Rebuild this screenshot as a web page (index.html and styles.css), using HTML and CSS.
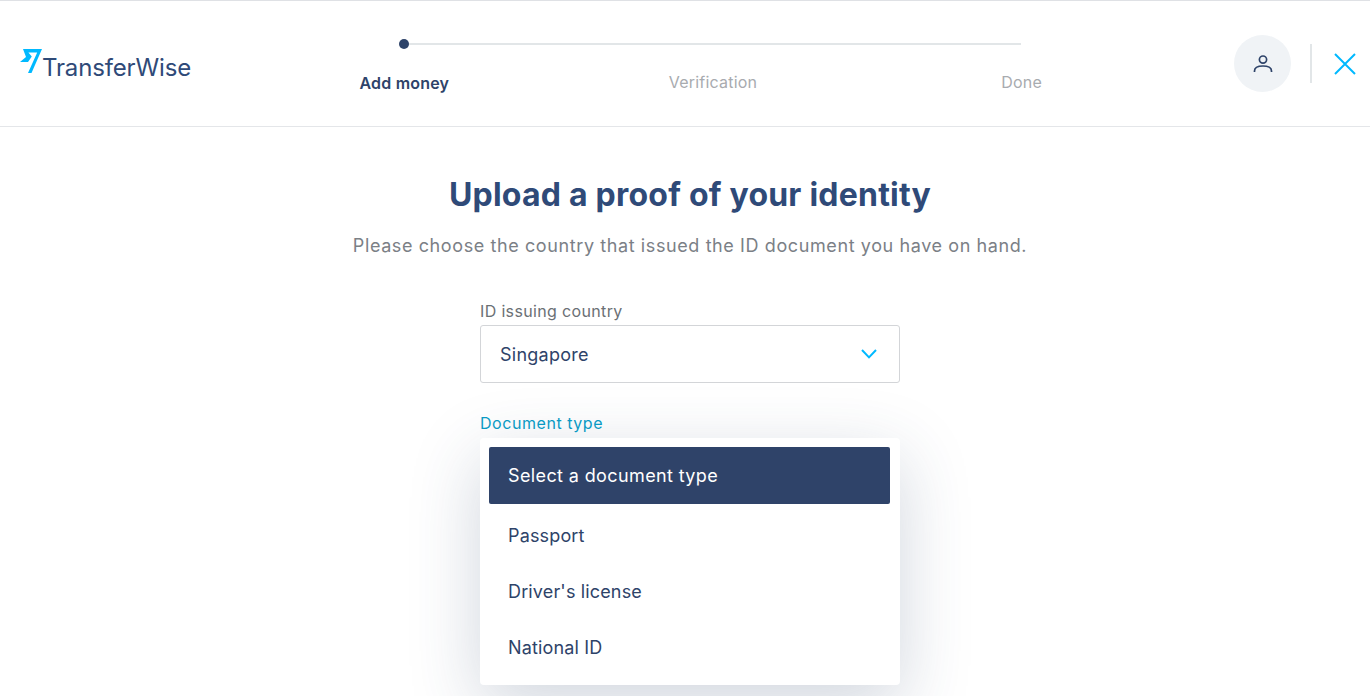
FILE: index.html
```html
<!DOCTYPE html>
<html lang="en">
<head>
<meta charset="utf-8">
<title>Upload a proof of your identity</title>
<link rel="stylesheet" href="styles.css">
</head>
<body>
<header class="topbar">
  <a class="logo">
    <svg class="logo-mark" viewBox="0 0 24 26" width="24" height="26" aria-hidden="true"><path fill="#00b9ff" d="M4 1 L23 1 L12.5 25 L9 25 L18.2 4.4 L9.4 4.4 L12.8 8.6 L9 14 L1 14 L7 9 Z"/></svg>
    <span class="logo-text">TransferWise</span>
  </a>
  <div class="steps">
    <div class="track"><span class="dot"></span></div>
    <div class="step-labels">
      <span class="step active">Add money</span>
      <span class="step">Verification</span>
      <span class="step">Done</span>
    </div>
  </div>
  <div class="actions">
    <span class="avatar">
      <svg viewBox="0 0 20 20" width="20" height="20" fill="none" stroke="#2e4369" stroke-width="1.7" aria-hidden="true"><circle cx="10" cy="5.6" r="3.6"/><path d="M1.5 18 V17 C1.5 13.6 5 12 10 12 C15 12 18.5 13.6 18.5 17 V18"/></svg>
    </span>
    <span class="divider"></span>
    <svg class="close" viewBox="0 0 22 22" width="22" height="22" fill="none" stroke="#00b9ff" stroke-width="2" aria-hidden="true"><path d="M1 1 L21 21 M21 1 L1 21"/></svg>
  </div>
</header>
<main class="content">
  <h1 class="title">Upload a proof of your identity</h1>
  <p class="lead">Please choose the country that issued the ID document you have on hand.</p>
  <form class="form">
    <label class="label">ID issuing country</label>
    <div class="select">
      <span>Singapore</span>
      <svg viewBox="0 0 16 10" width="16" height="10" fill="none" stroke="#00b9ff" stroke-width="2" aria-hidden="true"><path d="M1 1 L8 8.4 L15 1"/></svg>
    </div>
    <div class="field-open">
      <label class="label focus">Document type</label>
      <ul class="menu">
        <li class="option selected">Select a document type</li>
        <li class="option">Passport</li>
        <li class="option">Driver's license</li>
        <li class="option">National ID</li>
      </ul>
    </div>
  </form>
</main>
</body>
</html>
```
FILE: styles.css
```css
* { box-sizing: border-box; }
html, body { margin: 0; height: 100%; overflow: hidden; background: #fff; }
body { font-family: "Inter", "Lato", sans-serif; color: #2e4369; border-top: 1px solid #dfe1e5; }
.topbar { height: 126px; border-bottom: 1px solid #e4e6e9; display: flex; align-items: flex-start; position: relative; }
.logo { width: 250px; flex: none; display: flex; align-items: flex-start; padding: 47px 0 0 19px; }
.logo-mark { flex: none; margin-right: -1px; }
.logo-text { font-size: 24px; line-height: 30px; letter-spacing: -0.15px; color: #2f4a78; margin-top: 5px; }
.steps { width: 926px; flex: none; padding-top: 38px; }
.track { height: 2px; background: #e2e6e8; margin: 4px 155px 0 154px; position: relative; }
.dot { position: absolute; left: -5px; top: -4px; width: 10px; height: 10px; border-radius: 50%; background: #2e4369; }
.step-labels { display: grid; grid-template-columns: repeat(3, 1fr); margin-top: 25px; text-align: center; font-size: 16px; line-height: 24px; color: #a8abaf; letter-spacing: 0.2px; }
.step.active { color: #2e4369; font-weight: 600; padding-top: 1px; }
.actions { margin-left: auto; display: flex; align-items: center; padding: 34px 14px 0 0; }
.avatar { width: 57px; height: 57px; border-radius: 50%; background: #f0f3f6; display: flex; align-items: center; justify-content: center; }
.divider { width: 2px; height: 39px; background: #e2e6e8; margin: 0 22px 0 19px; }
.content { display: flex; flex-direction: column; align-items: center; padding-left: 10px; }
.title { margin: 48px 0 0; font-size: 32px; line-height: 40px; font-weight: 700; color: #2f4a78; letter-spacing: 0.22px; }
.lead { margin: 18px 0 0; font-size: 18px; line-height: 26px; color: #7b8086; letter-spacing: 0.6px; }
.form { width: 420px; margin-top: 40px; }
.label { display: block; font-size: 16px; line-height: 24px; color: #6b7075; letter-spacing: 0.35px; }
.label.focus { color: #0a9ac4; letter-spacing: 0.55px; }
.select { height: 58px; margin-top: 2px; border: 1px solid #d3d5d8; border-radius: 3px; display: flex; align-items: center; justify-content: space-between; padding: 0 22px 0 19px; font-size: 18px; letter-spacing: 0.25px; }
.field-open { margin-top: 28px; }
.menu { list-style: none; margin: 3px 0 0; padding: 9px 10px 9px 9px; height: 247px; background: #fff; border-radius: 4px; box-shadow: 0 20px 70px rgba(46, 67, 105, 0.22); }
.option { height: 56px; padding: 0 19px; display: flex; align-items: center; font-size: 18px; letter-spacing: 0.15px; border-radius: 2px; }
.option.selected { height: 57px; background: #2f4369; color: #fff; margin-bottom: 3px; letter-spacing: 0.38px; padding-bottom: 0; }
```
